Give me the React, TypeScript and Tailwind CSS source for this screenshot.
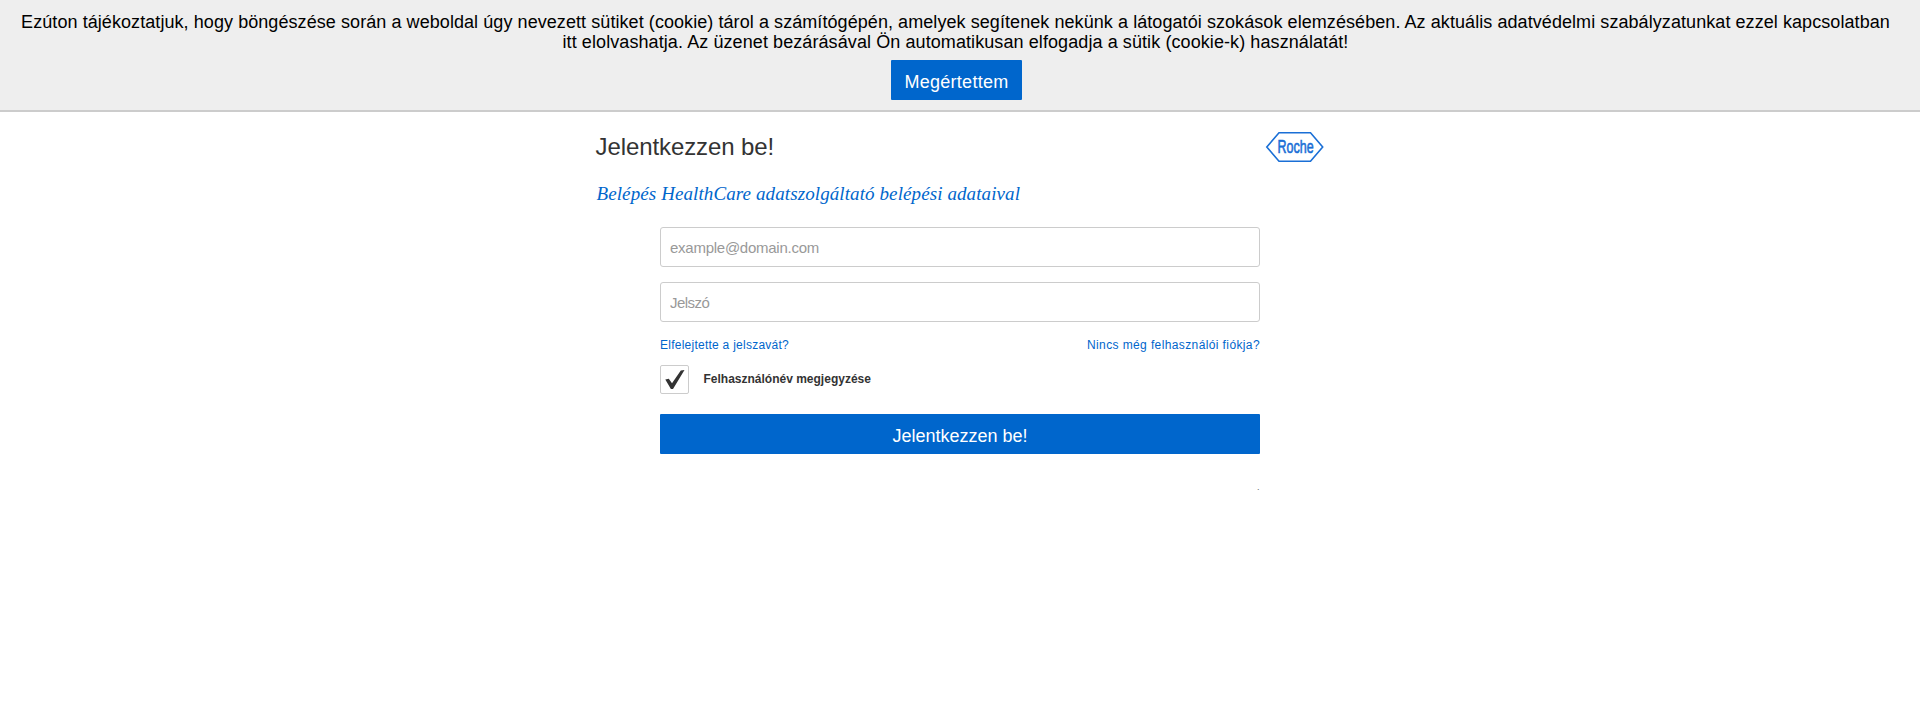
function CookieNotice() {
  return (
    <div className="flex h-28 flex-col items-center border-b-2 border-[#ccc] bg-[#eee] pt-3 pr-[9px] text-lg leading-5 text-black">
      <p className="text-center">
        <span className="block whitespace-nowrap tracking-[0.07px]">
          Ezúton tájékoztatjuk, hogy böngészése során a weboldal úgy nevezett sütiket (cookie) tárol a számítógépén, amelyek
          segítenek nekünk a látogatói szokások elemzésében. Az aktuális adatvédelmi szabályzatunkat ezzel kapcsolatban
        </span>
        <span className="block whitespace-nowrap tracking-[0.087px]">
          itt elolvashatja. Az üzenet bezárásával Ön automatikusan elfogadja a sütik (cookie-k) használatát!
        </span>
      </p>
      <button className="mt-2 ml-0.5 h-10 w-[131px] rounded-[1px] bg-[#0066cc] pt-[3px] leading-9 tracking-[0.25px] text-white">
        Megértettem
      </button>
    </div>
  );
}

function RocheLogo() {
  return (
    <svg className="-mt-1 h-8 w-[60px] overflow-visible" viewBox="0 0 60 32" fill="none">
      <path d="M1.8 16 14 1.8h31.5L57.7 16 45.5 30.2H14z" stroke="#1a6fd6" strokeWidth="1.6" />
      <text
        x="12.6"
        y="21.8"
        textLength="36"
        lengthAdjust="spacingAndGlyphs"
        fill="#1a6fd6"
        stroke="#1a6fd6"
        strokeWidth="0.6"
        className="font-['Liberation_Sans_Narrow','Liberation_Sans',sans-serif] text-[17.5px]"
      >
        Roche
      </text>
    </svg>
  );
}

export default function App() {
  const field =
    'h-10 w-full rounded-[3px] border border-[#ccc] bg-white pr-[9px] pl-[9.5px] text-[15px] text-[#333] outline-none placeholder:text-[#999] placeholder:opacity-100';
  return (
    <div className="min-h-screen bg-white font-['Liberation_Sans',Arial,sans-serif] text-[#333]">
      <CookieNotice />
      <main className="mx-auto w-[729px] pt-[23px]">
        <header className="flex h-[47px] items-start justify-between">
          <h1 className="text-2xl leading-6 tracking-[-0.09px]">Jelentkezzen be!</h1>
          <RocheLogo />
        </header>
        <h2 className="pl-px font-['Liberation_Serif',serif] text-[19px] leading-6 tracking-[0.1px] text-[#0066cc] italic">
          Belépés HealthCare adatszolgáltató belépési adataival
        </h2>
        <form className="mt-[21px] ml-[64px] flex w-[600px] flex-col">
          <input className={`${field} tracking-[-0.257px]`} type="text" placeholder="example@domain.com" />
          <input className={`${field} mt-[15px] tracking-[-0.55px]`} type="password" placeholder="Jelszó" />
          <div className="mt-[15px] flex justify-between pl-[0.5px] text-xs leading-4 text-[#0066cc]">
            <a className="tracking-[0.25px]">Elfelejtette a jelszavát?</a>
            <a className="-mr-[0.5px] tracking-[0.386px]">Nincs még felhasználói fiókja?</a>
          </div>
          <label className="mt-3 flex h-[29px] items-start">
            <span className="h-[29px] w-[29px] rounded-[2px] border border-[#ccc]">
              <svg className="h-[27px] w-[27px]" viewBox="0 0 27 27" fill="#333">
                <path d="M4.3 13.6 7.8 12.7 11 17.3 19.8 4.5 23.5 4.1 12 23 9.9 23z" />
              </svg>
            </span>
            <span className="mt-1.5 ml-[15px] text-xs leading-4 font-bold">Felhasználónév megjegyzése</span>
          </label>
          <button type="button" className="mt-5 h-10 rounded-[1px] bg-[#0066cc] pt-1 pl-px text-lg leading-9 text-white">
            Jelentkezzen be!
          </button>
          <div className="mt-[27px] self-end text-[9px] leading-3 text-[#666]">.</div>
        </form>
      </main>
    </div>
  );
}
